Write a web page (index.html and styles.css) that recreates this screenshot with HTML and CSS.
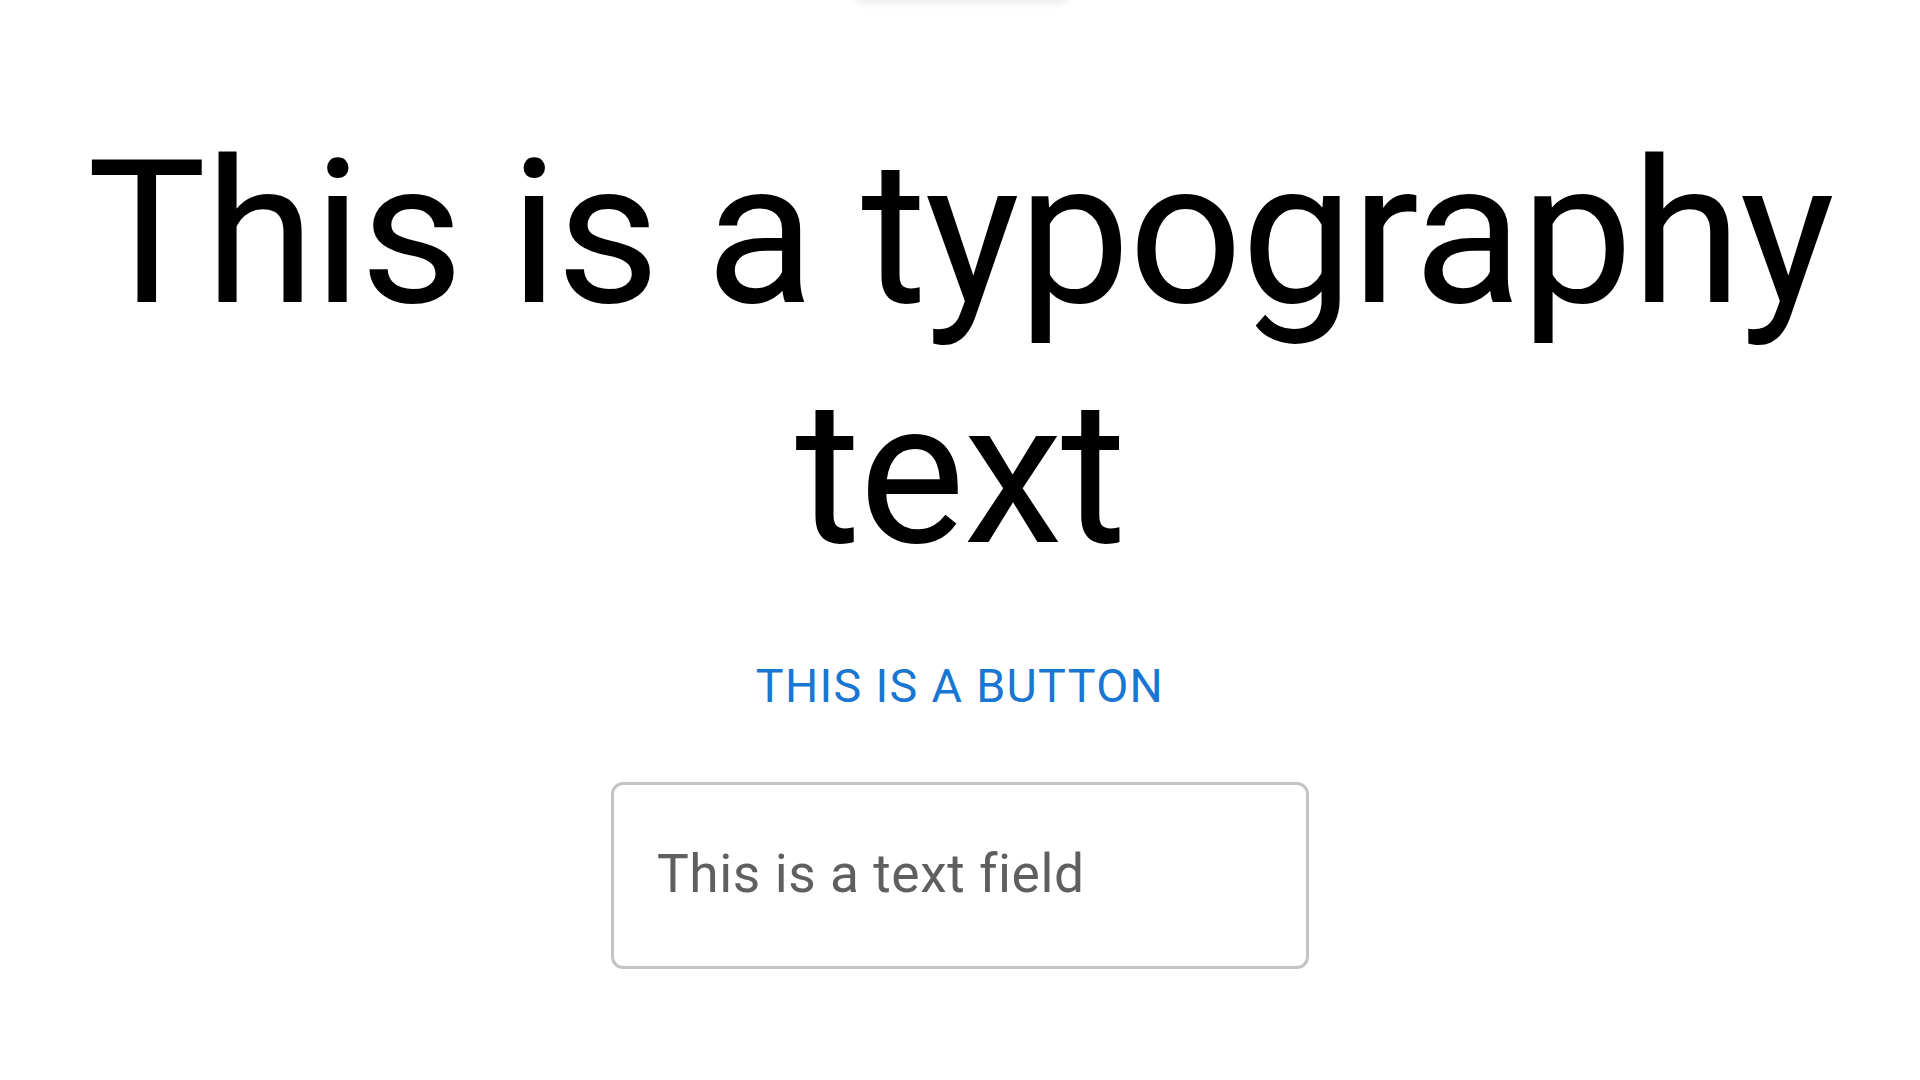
FILE: index.html
```html
<!DOCTYPE html>
<html lang="en">
<head>
<meta charset="utf-8">
<title>Typography demo</title>
<link rel="stylesheet" href="styles.css">
</head>
<body>
<div class="peek"></div>
<main class="page">
  <h2 class="title">This is a typography text</h2>
  <button class="text-button" type="button">This is a button</button>
  <div class="field">
    <input class="field-input" type="text" placeholder="This is a text field">
  </div>
</main>
</body>
</html>
```
FILE: styles.css
```css
html, body {
  margin: 0;
  padding: 0;
  background: #ffffff;
}

body {
  font-family: Roboto, "Liberation Sans", Arial, sans-serif;
  overflow: hidden;
}

.peek {
  position: absolute;
  top: -40px;
  left: 855px;
  width: 214px;
  height: 40px;
  border-radius: 8px;
  background: #fff;
  box-shadow: 0 2px 10px rgba(0, 0, 0, 0.10);
}

.page {
  display: flex;
  flex-direction: column;
  align-items: center;
  padding-top: 114px;
}

.title {
  margin: 0;
  font-size: 200px;
  font-weight: 400;
  line-height: 240px;
  letter-spacing: -1.67px;
  color: #000;
  text-align: center;
  width: 1800px;
}

.text-button {
  margin-top: 32px;
  border: 0;
  background: transparent;
  font-family: Roboto, "Liberation Sans", Arial, sans-serif;
  font-size: 46.67px;
  font-weight: 400;
  line-height: 1.75;
  letter-spacing: 1.33px;
  text-transform: uppercase;
  color: #1976d2;
  padding: 20px 27px;
  cursor: pointer;
}

.field {
  margin-top: 34px;
  box-sizing: border-box;
  width: 698px;
  height: 187px;
  border: 3px solid #c4c4c4;
  border-radius: 12px;
  display: flex;
  align-items: flex-start;
  padding: 51px 43px 0 43px;
}

.field-input {
  width: 100%;
  border: 0;
  outline: none;
  padding: 0;
  margin: 0;
  background: transparent;
  font-family: Roboto, "Liberation Sans", Arial, sans-serif;
  font-size: 53.33px;
  line-height: 76.67px;
  height: 76.67px;
  letter-spacing: 0.55px;
  color: #5f5f5f;
}

.field-input::placeholder {
  color: #5f5f5f;
  opacity: 1;
}
```
